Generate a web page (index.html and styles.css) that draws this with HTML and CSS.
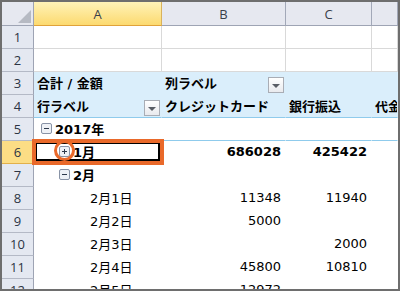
FILE: index.html
```html
<!DOCTYPE html>
<html lang="ja">
<head>
  <meta charset="UTF-8">
  <title>ピボットテーブル</title>
  <link rel="stylesheet" href="styles.css">
</head>
<body>
  <div class="sheet">
    <!-- column headers -->
    <div class="row hdr-row">
      <div class="cell corner">
        <svg class="tri" width="13" height="13" viewBox="0 0 13 13"><path d="M13 0V13H0Z" fill="#b6bac3"/></svg>
      </div>
      <div class="cell ch sel">A</div>
      <div class="cell ch">B</div>
      <div class="cell ch">C</div>
      <div class="cell ch"></div>
    </div>

    <div class="row">
      <div class="cell rh">1</div>
      <div class="cell"></div><div class="cell"></div><div class="cell"></div><div class="cell"></div>
    </div>
    <div class="row">
      <div class="cell rh">2</div>
      <div class="cell"></div><div class="cell"></div><div class="cell"></div><div class="cell"></div>
    </div>

    <!-- pivot header -->
    <div class="row pv blue">
      <div class="cell rh">3</div>
      <div class="cell b">合計 / 金額</div>
      <div class="cell b split">列ラベル<span class="dd"></span></div>
      <div class="cell"></div>
      <div class="cell"></div>
    </div>
    <div class="row pv blue line">
      <div class="cell rh">4</div>
      <div class="cell b split">行ラベル<span class="dd"></span></div>
      <div class="cell b">クレジットカード</div>
      <div class="cell b">銀行振込</div>
      <div class="cell b">代金</div>
    </div>

    <!-- pivot body -->
    <div class="row pv line">
      <div class="cell rh">5</div>
      <div class="cell b lv0">
        <svg class="pm" viewBox="0 0 11 11"><rect x=".5" y=".5" width="10" height="10" rx="1.5" fill="#eef1f6" stroke="#8893a6"/><path d="M3 5.5h5" stroke="#2d3a4c"/></svg>2017年
      </div>
      <div class="cell"></div><div class="cell"></div><div class="cell"></div>
    </div>
    <div class="row pv">
      <div class="cell rh sel">6</div>
      <div class="cell b lv1 active">
        <svg class="pm" viewBox="0 0 11 11"><rect x=".5" y=".5" width="10" height="10" rx="1.5" fill="#eef1f6" stroke="#8893a6"/><path d="M3 5.5h5M5.5 3v5" stroke="#2d3a4c"/></svg>1月
        <span class="mark"></span>
        <span class="ring"></span>
      </div>
      <div class="cell b num">686028</div>
      <div class="cell b num">425422</div>
      <div class="cell"></div>
    </div>
    <div class="row pv">
      <div class="cell rh">7</div>
      <div class="cell b lv1">
        <svg class="pm" viewBox="0 0 11 11"><rect x=".5" y=".5" width="10" height="10" rx="1.5" fill="#eef1f6" stroke="#8893a6"/><path d="M3 5.5h5" stroke="#2d3a4c"/></svg>2月
      </div>
      <div class="cell"></div><div class="cell"></div><div class="cell"></div>
    </div>
    <div class="row pv">
      <div class="cell rh">8</div>
      <div class="cell lv2">2月1日</div>
      <div class="cell num">11348</div>
      <div class="cell num">11940</div>
      <div class="cell"></div>
    </div>
    <div class="row pv">
      <div class="cell rh">9</div>
      <div class="cell lv2">2月2日</div>
      <div class="cell num">5000</div>
      <div class="cell num"></div>
      <div class="cell"></div>
    </div>
    <div class="row pv">
      <div class="cell rh">10</div>
      <div class="cell lv2">2月3日</div>
      <div class="cell num"></div>
      <div class="cell num">2000</div>
      <div class="cell"></div>
    </div>
    <div class="row pv">
      <div class="cell rh">11</div>
      <div class="cell lv2">2月4日</div>
      <div class="cell num">45800</div>
      <div class="cell num">10810</div>
      <div class="cell"></div>
    </div>
    <div class="row pv">
      <div class="cell rh">12</div>
      <div class="cell lv2">2月5日</div>
      <div class="cell num">12972</div>
      <div class="cell num"></div>
      <div class="cell"></div>
    </div>
  </div>
</body>
</html>
```

FILE: styles.css
```css
body {
  margin: 0;
  font-family: "DejaVu Sans", "Noto Sans CJK JP", sans-serif;
  font-size: 13px;
  color: #000;
  background: #fff;
}
.sheet {
  width: 400px;
  height: 291px;
  box-sizing: border-box;
  border: 2px solid #6e6e6e;
  overflow: hidden;
  background: #fff;
}
.row {
  display: grid;
  grid-template-columns: 32px 128px 124px 86px 26px;
  height: 23px;
}
.hdr-row {
  height: 24px;
}
.cell {
  box-sizing: border-box;
  border-right: 1px solid #d9d9d9;
  border-bottom: 1px solid #d9d9d9;
  display: flex;
  align-items: center;
  padding: 0 3px 2px;
  white-space: nowrap;
  overflow: hidden;
}

/* headers */
.corner {
  background: #e6e8f0;
  border-right: 1px solid #9ea4b4;
  border-bottom: 1px solid #9ea4b4;
  align-items: flex-end;
  justify-content: flex-end;
  padding: 0 2px 2px 0;
}
.ch {
  background: #e6e8f0;
  border-right: 1px solid #a2a8b8;
  border-bottom: 1px solid #9ea4b4;
  justify-content: center;
  padding-bottom: 0;
  font-family: "Open Sans", sans-serif;
  font-size: 13px;
  color: #3a3f4a;
}
.ch.sel {
  background: linear-gradient(#fff3b8, #fcda70);
  border-bottom-color: #e0a23a;
  border-right-color: #d9b25c;
}
.rh {
  background: #e4e8f1;
  border-right: 1px solid #9ea4b4;
  border-bottom: 1px solid #b4b9c6;
  justify-content: center;
  padding: 0;
  font-family: "Open Sans", sans-serif;
  font-size: 13px;
  color: #2c3444;
}
.rh.sel {
  background: #fcdd85;
  border-bottom-color: #e2b04a;
}

/* pivot area */
.pv .cell:not(.rh) {
  border-color: transparent;
}
.pv.blue .cell:not(.rh) {
  background: #daeefb;
}
.pv.line .cell:not(.rh) {
  border-bottom-color: #8fcbec;
}
.b {
  font-weight: bold;
}
.split {
  justify-content: space-between;
  padding-right: 1px;
}
.dd {
  align-self: flex-end;
  margin-bottom: -1px;
  width: 16px;
  height: 16px;
  box-sizing: border-box;
  border: 1px solid #a9adb5;
  background: linear-gradient(#ffffff, #e9eaee);
  display: flex;
  align-items: center;
  justify-content: center;
}
.dd::after {
  content: "";
  margin-top: 2px;
  border-left: 4px solid transparent;
  border-right: 4px solid transparent;
  border-top: 4px solid #5a5e66;
}
.num {
  justify-content: flex-end;
  padding-right: 4px;
}
.pm {
  width: 11px;
  height: 11px;
  margin-right: 3px;
  flex: none;
}
.lv0 { padding-left: 7px; }
.lv1 { padding-left: 25px; }
.lv2 { padding-left: 56px; }

/* selected cell + annotation */
.active {
  position: relative;
  overflow: visible;
}
.mark {
  position: absolute;
  left: -2px;
  top: -2px;
  right: -3px;
  bottom: -2px;
  border: 4px solid #e9692a;
  box-shadow: inset -2px -2px 0 0 #000, inset 1px 1px 0 0 #000;
  z-index: 2;
}
.ring {
  position: absolute;
  left: 20px;
  top: -1px;
  width: 21px;
  height: 21px;
  box-sizing: border-box;
  border: 3px solid #e9692a;
  border-radius: 50%;
  z-index: 3;
}
```
